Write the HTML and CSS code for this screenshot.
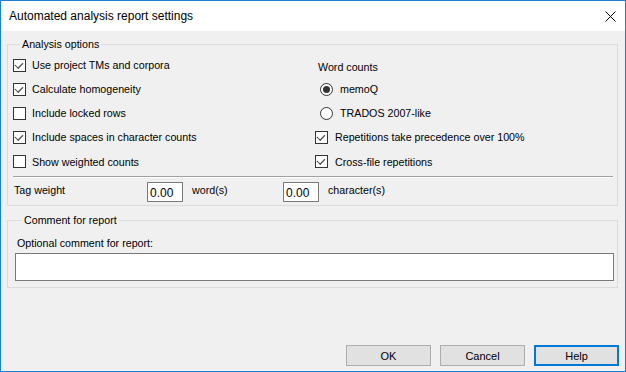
FILE: index.html
```html
<!DOCTYPE html>
<html lang="en">
<head>
    <meta charset="UTF-8">
    <title>Automated analysis report settings</title>
    <link rel="stylesheet" href="styles.css">
</head>
<body>

    <div class="window">
        <!-- Заголовок окна -->
        <div class="titlebar">
            <span class="title">Automated analysis report settings</span>
            <svg class="close" width="11" height="11" viewBox="0 0 11 11">
                <path d="M0.5 0.5L10.5 10.5M10.5 0.5L0.5 10.5" stroke="#000" stroke-width="1" fill="none"/>
            </svg>
        </div>

        <div class="body">
            <fieldset class="group group-analysis">
                <legend>Analysis options</legend>

                <div class="options">
                    <div class="opt"><span class="box checked"></span>Use project TMs and corpora</div>
                    <div class="opt opt-right heading">Word counts</div>

                    <div class="opt"><span class="box checked"></span>Calculate homogeneity</div>
                    <div class="opt opt-right radio-row"><span class="radio selected"></span>memoQ</div>

                    <div class="opt"><span class="box"></span>Include locked rows</div>
                    <div class="opt opt-right radio-row"><span class="radio"></span>TRADOS 2007-like</div>

                    <div class="opt"><span class="box checked"></span>Include spaces in character counts</div>
                    <div class="opt opt-right"><span class="box checked"></span>Repetitions take precedence over 100%</div>

                    <div class="opt"><span class="box"></span>Show weighted counts</div>
                    <div class="opt opt-right"><span class="box checked"></span>Cross-file repetitions</div>
                </div>

                <div class="separator"></div>

                <div class="tag-row">
                    <span class="tag-label">Tag weight</span>
                    <span class="field">0.00</span>
                    <span class="unit">word(s)</span>
                    <span class="field">0.00</span>
                    <span class="unit">character(s)</span>
                </div>
            </fieldset>

            <fieldset class="group group-comment">
                <legend>Comment for report</legend>
                <div class="comment-label">Optional comment for report:</div>
                <div class="comment-box"></div>
            </fieldset>

            <div class="buttons">
                <button class="btn">OK</button>
                <button class="btn">Cancel</button>
                <button class="btn btn-default">Help</button>
            </div>
        </div>
    </div>

</body>
</html>
```

FILE: styles.css
```css
* {
    box-sizing: border-box;
}

body {
    margin: 0;
    background-color: #f0f0f0;
    font-family: 'Liberation Sans', Arial, sans-serif;
    font-size: 10.7px;
    color: #000;
}

.window {
    width: 626px;
    height: 372px;
    border: 1px solid #1c7fd6;
    display: flex;
    flex-direction: column;
    background-color: #f0f0f0;
}

/* Заголовок */
.titlebar {
    height: 30px;
    background-color: #fff;
    display: flex;
    align-items: center;
    justify-content: space-between;
    padding: 0 9px 0 8px;
}

.title {
    font-size: 12px;
}

.close {
    display: block;
}

.body {
    flex: 1;
    display: flex;
    flex-direction: column;
    padding: 6px 7px 5px 6px;
}

/* Групповые рамки */
.group {
    margin: 0;
    padding: 0;
    border: 1px solid #dcdcdc;
    min-width: 0;
}

.group legend {
    margin-left: 7px;
    padding: 0 2px;
    line-height: 14px;
    height: 14px;
}

.group-analysis {
    padding: 2px 4px 3px 5px;
}

.options {
    display: grid;
    grid-template-columns: 302px 1fr;
    grid-template-rows: 24px 24px 24px 24px 25px;
}

.opt {
    display: flex;
    align-items: center;
    white-space: nowrap;
}

.opt .box {
    margin-right: 6px;
}

.opt-right .box {
    margin-right: 7px;
}

.heading {
    padding-left: 3px;
    padding-top: 3px;
}

.radio-row {
    padding-left: 5px;
}

.radio-row .radio {
    margin-right: 7px;
}

/* Чекбоксы и радиокнопки */
.box {
    width: 13px;
    height: 13px;
    border: 1px solid #333;
    background-color: #fff;
    flex: none;
    position: relative;
}

.box.checked::after {
    content: "";
    position: absolute;
    left: 2px;
    top: 1px;
    width: 6px;
    height: 3px;
    border-left: 1px solid #555;
    border-bottom: 1px solid #555;
    transform: translate(0, 2px) rotate(-45deg) scale(1.05, 1.35);
    transform-origin: 40% 60%;
}

.radio {
    width: 13px;
    height: 13px;
    border: 1px solid #333;
    border-radius: 50%;
    background-color: #fff;
    flex: none;
    display: flex;
    align-items: center;
    justify-content: center;
}

.radio.selected::after {
    content: "";
    width: 7px;
    height: 7px;
    border-radius: 50%;
    background-color: #333;
}

.separator {
    margin-top: 2px;
    height: 2px;
    border-top: 1px solid #a0a0a0;
    border-bottom: 1px solid #fff;
}

/* Вес тегов */
.tag-row {
    display: flex;
    align-items: center;
    margin-top: 4px;
    height: 20px;
}

.tag-label {
    width: 134px;
    padding-left: 1px;
    margin-top: -4px;
}

.field {
    width: 36px;
    height: 20px;
    border: 1px solid #7a7a7a;
    background-color: #fff;
    padding: 3px 0 0 2px;
    font-size: 12px;
    line-height: 14px;
}

.unit {
    margin-left: 9px;
    width: 91px;
    margin-top: -4px;
}

/* Комментарий */
.group-comment {
    margin-top: 7px;
    padding: 9px 3px 6px 7px;
}

.comment-label {
    padding-left: 2px;
    line-height: 14px;
}

.comment-box {
    margin-top: 3px;
    height: 28px;
    border: 1px solid #7a7a7a;
    background-color: #fff;
}

/* Кнопки */
.buttons {
    margin-top: auto;
    margin-right: -1px;
    display: flex;
    justify-content: flex-end;
    gap: 9px;
}

.btn {
    width: 85px;
    height: 21px;
    border: 1px solid #adadad;
    background-color: #e1e1e1;
    font-family: inherit;
    font-size: 11px;
    color: #000;
    padding: 0;
}

.btn-default {
    border: 2px solid #0078d7;
}
```
